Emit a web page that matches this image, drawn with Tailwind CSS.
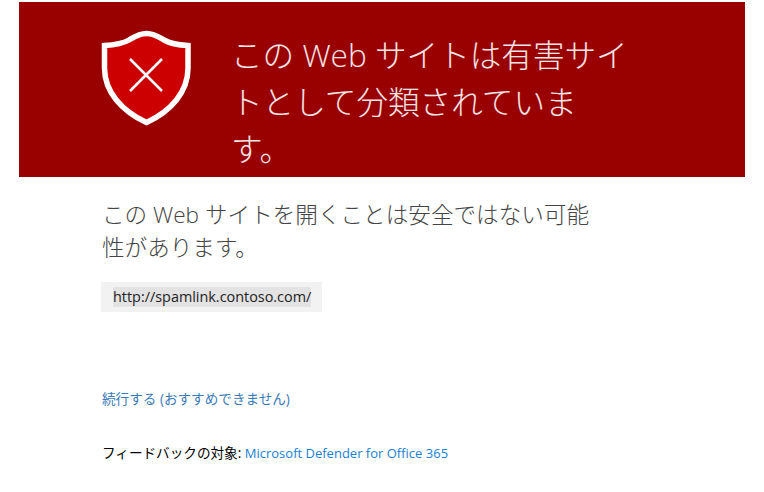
<!DOCTYPE html>
<html lang="ja">
<head>
    <meta charset="UTF-8">
    <title>安全ではない Web サイト</title>
    <script src="https://cdn.jsdelivr.net/npm/@tailwindcss/browser@4"></script>
</head>
<body class="bg-white h-[492px] overflow-hidden font-['Open_Sans','Noto_Sans_CJK_JP',sans-serif]">
    <!-- banner -->
    <div class="ml-[19px] mt-[2px] w-[726px] h-[175px] bg-[#990000] flex">
        <svg class="ml-[82px] mt-[28px] w-[90px] h-[96px] shrink-0" viewBox="0 0 90 96">
            <path d="M45.500 3.500C38 3.500 33 7 28 10C21 14 12 15 3.500 15.500V38C3.500 62 21 81 45.500 92.500C70 81 87 62 87 38V15.500C78 15 70 14 63 10C58 7 53 3.500 45.500 3.500Z" fill="#cc0000" stroke="#fff" stroke-width="5.500"/>
            <path d="M29 29L61 61M61 29L29 61" stroke="#fff" stroke-width="2.500" fill="none"/>
        </svg>
        <h1 class="ml-[40px] mt-[29px] w-[400px] text-[31.600px] leading-[47px] font-light text-white/90">この Web サイトは有害サイトとして分類されています。</h1>
    </div>

    <div class="ml-[101px] w-[500px]">
        <p class="mt-[21px] ml-[1px] w-[490px] text-[22.600px] leading-[33px] font-light text-[#444444]">この Web サイトを開くことは安全ではない可能性があります。</p>
        <div class="mt-[18px] w-[221px] h-[30px] bg-[#f2f2f2] flex items-center pl-[12px]">
            <span class="block text-[14.400px] leading-[20px] bg-[#e3e3e3] text-[#222222]">http://spamlink.contoso.com/</span>
        </div>
        <a href="#" class="block mt-[77px] ml-[1px] text-[13.600px] leading-[20px] text-[#3a7ab8]">続行する (おすすめできません)</a>
        <p class="mt-[34px] ml-[1px] text-[13.600px] leading-[20px] text-black whitespace-nowrap">フィードバックの対象: <a href="#" class="text-[13px] text-[#1a7fd6]">Microsoft Defender for Office 365</a></p>
    </div>
</body>
</html>
